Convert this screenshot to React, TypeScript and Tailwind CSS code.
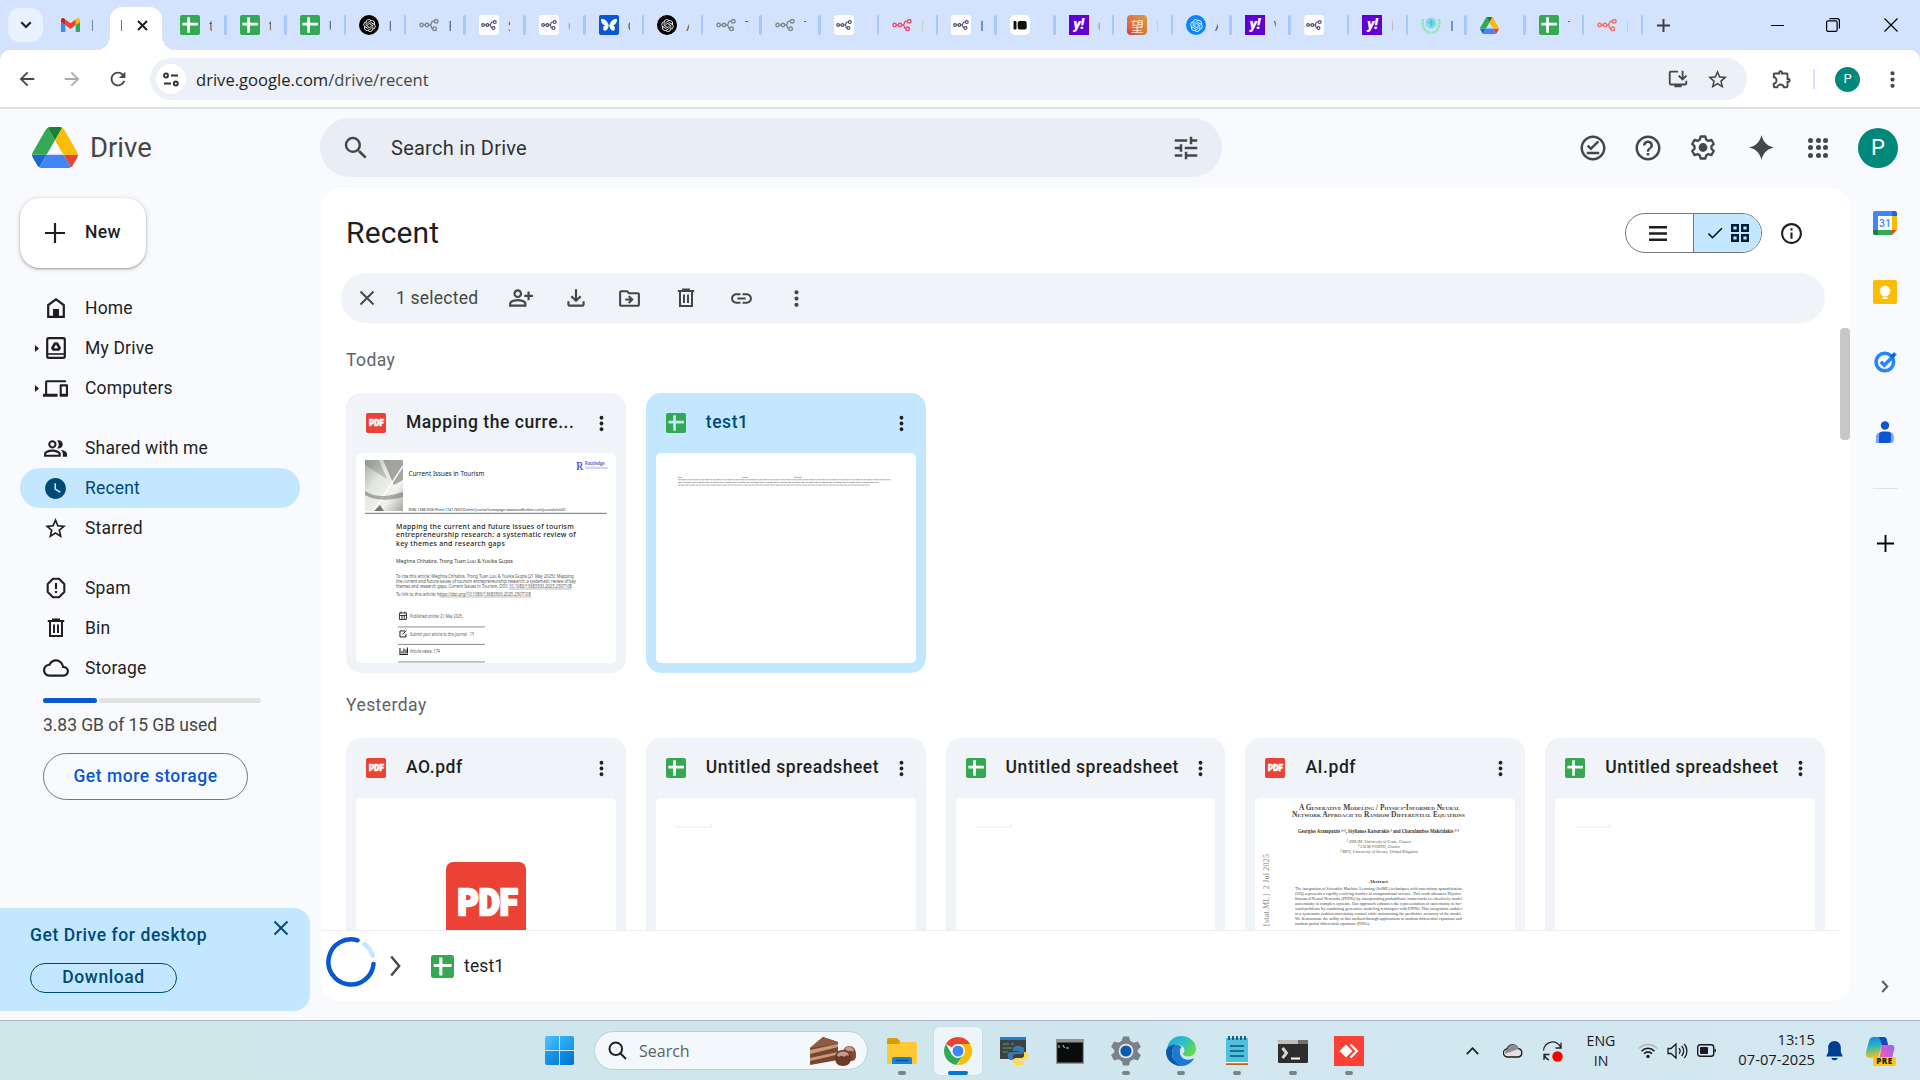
import type { ReactNode } from 'react';
import {
  MdArrowBack, MdArrowForward, MdCheck, MdCloudQueue, MdLink, MdMoreVert, MdOutlineDevices,
  MdOutlineDriveFileMove, MdOutlineExtension, MdOutlineFileDownload, MdOutlineInfo, MdOutlineInstallDesktop,
  MdOutlineOfflinePin, MdOutlinePeopleAlt, MdOutlinePersonAddAlt, MdRefresh, MdSearch, MdStarBorder,
  MdHelpOutline, MdTune, MdWatchLater,
} from 'react-icons/md';
import { RiOpenaiFill } from 'react-icons/ri';

/* ---------- shared icons ---------- */

function SheetsIcon({ size, cut = '#ffffff' }: { size: number; cut?: string }) {
  return (
    <svg width={size} height={size} viewBox="0 0 20 20" className="shrink-0">
      <rect width="20" height="20" rx="2" fill="#34a853" />
      <path d="M7.2 2.2h2.7v5.6h8v2.6h-8v7.4H7.2v-7.4H2.4V7.8h4.8z" fill={cut} />
    </svg>
  );
}

function PdfIcon({ size }: { size: number }) {
  return (
    <svg width={size} height={size} viewBox="0 0 80 80" className="shrink-0">
      <rect width="80" height="80" rx="7" fill="#ea4335" />
      <text x="11.5" y="52.5" fontFamily="Roboto" fontWeight="900" fontSize="36" textLength="60" lengthAdjust="spacingAndGlyphs" fill="#fff" stroke="#fff" strokeWidth="2.4">
        PDF
      </text>
    </svg>
  );
}

function DriveLogo({ w, h }: { w: number; h: number }) {
  return (
    <svg width={w} height={h} viewBox="0 0 87.3 78" preserveAspectRatio="none" className="shrink-0">
      <path fill="#1967d2" d="m6.6 66.85 3.85 6.65c.8 1.4 1.95 2.5 3.3 3.3l13.75-23.8H0c0 1.55.4 3.1 1.2 4.5z" />
      <path fill="#34a853" d="M43.65 25 29.9 1.2c-1.35.8-2.5 1.9-3.3 3.3l-25.4 44A9.06 9.06 0 0 0 0 53h27.5z" />
      <path fill="#ea4335" d="M73.55 76.8c1.35-.8 2.5-1.9 3.3-3.3l9.25-16c.8-1.4 1.2-2.95 1.2-4.5H59.8z" />
      <path fill="#188038" d="M43.65 25 57.4 1.2C56.05.4 54.5 0 52.9 0H34.4c-1.6 0-3.15.45-4.5 1.2z" />
      <path fill="#4285f4" d="M59.8 53H27.5L13.75 76.8c1.35.8 2.9 1.2 4.5 1.2h50.8c1.6 0 3.15-.45 4.5-1.2z" />
      <path fill="#fbbc04" d="m73.4 26.5-12.7-22c-.8-1.4-1.95-2.5-3.3-3.3L43.65 25 59.8 53h27.45c0-1.55-.4-3.1-1.2-4.5z" />
    </svg>
  );
}

function TrashIcon({ size }: { size: number }) {
  return (
    <svg width={size} height={size} viewBox="0 0 24 24" fill="none" stroke="currentColor" strokeWidth="2" className="shrink-0">
      <path d="M6 5.5v14.5h12V5.5M3.8 5h16.4M9 4.2V3.6h6v.6M10 8.5V17M14 8.5V17" />
    </svg>
  );
}

function CloseIcon({ size }: { size: number }) {
  return (
    <svg width={size} height={size} viewBox="0 0 16 16" fill="none" stroke="currentColor" strokeWidth="1.9" className="shrink-0">
      <path d="M1.5 1.5l13 13M14.5 1.5l-13 13" />
    </svg>
  );
}

function PlusIcon({ size, stroke = 2 }: { size: number; stroke?: number }) {
  return (
    <svg width={size} height={size} viewBox="0 0 20 20" fill="none" stroke="currentColor" strokeWidth={stroke} className="shrink-0">
      <path d="M10 0v20M0 10h20" />
    </svg>
  );
}

/* ---------- browser tab strip ---------- */

function NodesGlyph({ color, w = 20 }: { color: string; w?: number }) {
  return (
    <svg width={w} height={w} viewBox="0 0 20 20" fill="none" stroke={color} strokeWidth="1.4">
      <circle cx="2.6" cy="10" r="1.7" />
      <circle cx="8" cy="10" r="1.7" />
      <circle cx="17.2" cy="6.3" r="1.8" />
      <circle cx="15.6" cy="13.8" r="1.8" />
      <path d="M4.3 10h2M9.7 10h1.2c1.2 0 1.2-.8 1.4-1.8s.7-1.9 1.9-1.9h1.2M10.6 10c1.6 0 1.6 1 1.8 2s.6 1.8 1.6 1.8" />
    </svg>
  );
}

function WhiteNodes() {
  return (
    <div className="flex h-5 w-5 items-center justify-center rounded-[3px] bg-[#fdfdfd]">
      <NodesGlyph color="#4b4a6d" w={16} />
    </div>
  );
}

function GptIcon({ blue = false }: { blue?: boolean }) {
  return (
    <div className={blue ? 'flex h-5 w-5 items-center justify-center rounded-full bg-[#0a84ff] text-white' : 'flex h-5 w-5 items-center justify-center rounded-full bg-black text-white'}>
      <RiOpenaiFill size={15} />
    </div>
  );
}

function YahooIcon() {
  return (
    <div className="flex h-5 w-5 items-center justify-center bg-[#6001d2] font-['Roboto',sans-serif] text-[15px] leading-none font-black text-white">
      <span className="-mt-0.5 tracking-[-0.5px] italic">y!</span>
    </div>
  );
}

function ButterflyIcon() {
  return (
    <svg width="20" height="20" viewBox="0 0 20 20">
      <rect width="20" height="20" rx="2" fill="#0b57d6" />
      <path d="M9.7 10.5C9 7 5.5 3 2 4.2c0 3.3 1.5 5.8 4.4 6.1-2.5.8-3 3.2-1.4 5.5 2.7.2 4.3-2 4.7-5.3zM10.3 10.5c.7-3.5 4.2-7.5 7.7-6.3 0 3.3-1.5 5.8-4.4 6.1 2.5.8 3 3.2 1.4 5.5-2.7.2-4.3-2-4.7-5.3z" fill="#fff" />
    </svg>
  );
}

function TabbedIcon() {
  return (
    <svg width="20" height="20" viewBox="0 0 20 20">
      <rect width="20" height="20" rx="5" fill="#fff" />
      <rect x="3.5" y="6" width="3" height="8.5" rx="1" fill="#111" />
      <rect x="7.7" y="6" width="9" height="8.5" rx="2" fill="#111" />
    </svg>
  );
}

function WangIcon() {
  return (
    <div className="flex h-5 w-5 items-center justify-center rounded-[4px] bg-linear-to-tr from-[#e6123d] via-[#dd6a3f] via-30% to-[#dc9a43] font-['Noto_Sans_CJK_SC',sans-serif] text-[13px] leading-none text-[#fbeede]">
      望
    </div>
  );
}

function LaurelIcon() {
  return (
    <svg width="20" height="20" viewBox="0 0 20 20">
      <circle cx="10" cy="8" r="5.6" fill="#86dced" />
      <path d="M7.5 8.500c0-3 5-3 5-.5s-3.500 2-3.500.5 2-1.200 2-.5M10 4v8" stroke="#3fb6dd" fill="none" strokeWidth=".9" />
      <path d="M2 4c-1.500 7 1.500 13 7.500 14M18 4c1.500 7-1.500 13-7.500 14" stroke="#8fe3ae" strokeWidth="2.6" strokeDasharray="2.5 .7" fill="none" />
    </svg>
  );
}

function GmailIcon() {
  return (
    <svg width="19" height="14.5" viewBox="52 42 88 66">
      <path fill="#4285f4" d="M58 108h14V74L52 59v43c0 3.320 2.690 6 6 6" />
      <path fill="#34a853" d="M120 108h14c3.320 0 6-2.690 6-6V59l-20 15" />
      <path fill="#fbbc04" d="M120 48v26l20-15v-8c0-7.420-8.470-11.650-14.400-7.200" />
      <path fill="#ea4335" d="M72 74V48l24 18 24-18v26L96 92" />
      <path fill="#c5221f" d="M52 51v8l20 15V48l-5.600-4.200c-5.940-4.450-14.400-.22-14.400 7.200" />
    </svg>
  );
}

const tabs: { icon: ReactNode; label: string; faint?: boolean; wide?: boolean }[] = [
  { icon: <SheetsIcon size={20} />, label: 't', wide: true },
  { icon: <SheetsIcon size={20} />, label: 't', wide: true },
  { icon: <SheetsIcon size={20} />, label: 'U', wide: true },
  { icon: <GptIcon />, label: 'F', wide: true },
  { icon: <NodesGlyph color="#85888c" />, label: 'F', wide: true },
  { icon: <WhiteNodes />, label: 'S', wide: true },
  { icon: <WhiteNodes />, label: 'C', faint: true, wide: true },
  { icon: <ButterflyIcon />, label: 'C' },
  { icon: <GptIcon />, label: 'A' },
  { icon: <NodesGlyph color="#85888c" />, label: 'T' },
  { icon: <NodesGlyph color="#85888c" />, label: 'T' },
  { icon: <WhiteNodes />, label: '' },
  { icon: <NodesGlyph color="#ea4b71" />, label: 'I', faint: true },
  { icon: <WhiteNodes />, label: 'I' },
  { icon: <TabbedIcon />, label: '' },
  { icon: <YahooIcon />, label: 'C', faint: true },
  { icon: <WangIcon />, label: 'I', faint: true },
  { icon: <GptIcon blue />, label: 'A' },
  { icon: <YahooIcon />, label: 'V' },
  { icon: <WhiteNodes />, label: '' },
  { icon: <YahooIcon />, label: 'i', faint: true },
  { icon: <LaurelIcon />, label: 'I' },
  { icon: <DriveLogo w={19} h={17} />, label: '' },
  { icon: <SheetsIcon size={20} />, label: 'T' },
  { icon: <NodesGlyph color="#ff6d5a" />, label: 'I', faint: true },
];

function TabStrip() {
  return (
    <div className="flex h-[50px] items-center bg-[#d3e3fd] pl-2 font-['Open_Sans',sans-serif] text-[14px] text-[#474747]">
      <div className="flex h-[34px] w-[35px] items-center justify-center rounded-[12px] bg-[#e9f1fe] text-[#1f1f1f]">
        <svg width="12" height="8" viewBox="0 0 12 8" fill="none" stroke="currentColor" strokeWidth="2.2"><path d="M1.3 1.3L6 6l4.700-4.700" /></svg>
      </div>
      <div className="flex w-[67px] items-center gap-3 pl-[18px]">
        <GmailIcon />
        <span className="h-[11px] w-px bg-[#7d8794]" />
      </div>
      <div className="relative flex h-[43px] w-[52px] items-center self-end rounded-t-[12px] bg-white pb-[7px] pl-[11px]">
        <span className="h-[11px] w-px bg-[#777]" />
        <span className="ml-[15px] text-[#1f1f1f]">
          <svg width="11" height="11" viewBox="0 0 11 11" stroke="currentColor" strokeWidth="2"><path d="M1 1l9 9M10 1l-9 9" /></svg>
        </span>
        <svg className="absolute bottom-0 -left-3.5" width="14" height="14" viewBox="0 0 14 14"><path d="M14 0v14H0C8 14 14 8 14 0z" fill="#fff" /></svg>
        <svg className="absolute -right-3.5 bottom-0" width="14" height="14" viewBox="0 0 14 14"><path d="M0 0v14h14C6 14 0 8 0 0z" fill="#fff" /></svg>
      </div>
      <div className="ml-[5px] flex items-center">
        {tabs.map((t, i) => (
          <div key={i} className={t.wide ? 'flex h-5 w-[59.8px] items-center pl-[13px]' : 'flex h-5 w-[58.76px] items-center pl-[13px]'}>
            <div className="flex w-5 shrink-0 justify-center">{t.icon}</div>
            <span className={t.faint ? 'ml-[9px] w-[2px] overflow-hidden opacity-40' : 'ml-[9px] w-[2.5px] overflow-hidden opacity-85'}>{t.label}</span>
            <span className="ml-auto h-5 w-[2.5px] rounded-full bg-[#a8c7fa]" />
          </div>
        ))}
      </div>
      <div className="ml-3.5 text-[#3c3c3c]"><PlusIcon size={13} stroke={3} /></div>
      <div className="ml-auto flex items-center pr-[22px] text-black">
        <span className="h-px w-[13px] bg-black" />
        <svg width="14" height="14" viewBox="0 0 14 14" fill="none" stroke="currentColor" strokeWidth="1.2" className="ml-[42px]"><rect x=".6" y="2.9" width="10.5" height="10.5" rx="1.5" /><path d="M3.4.6h7.800a2.200 2.200 0 0 1 2.200 2.200v7.800" /></svg>
        <svg width="14" height="14" viewBox="0 0 14 14" stroke="currentColor" strokeWidth="1.2" className="ml-[44px]"><path d="M.5.5l13 13M13.5.5l-13 13" /></svg>
      </div>
    </div>
  );
}

function Toolbar() {
  return (
    <div className="bg-[#d3e3fd]">
      <div className="flex h-[59px] items-center rounded-t-[10px] border-b-2 border-[#dfe1e5] bg-white pt-px text-[#474747]">
        <div className="flex items-center pl-4"><MdArrowBack size={22} /></div>
        <div className="ml-[23px] text-[#ababab]"><MdArrowForward size={22} /></div>
        <div className="ml-[24px]"><MdRefresh size={22} /></div>
        <div className="ml-[21px] flex h-[42px] w-[1597px] items-center rounded-full bg-[#ebf0f9] pl-1.5">
          <div className="flex h-[30px] w-[30px] items-center justify-center rounded-full bg-white">
            <svg width="16" height="15" viewBox="0 0 16 15" fill="none" stroke="#333" strokeWidth="1.9"><circle cx="3" cy="3.5" r="2" /><path d="M8 3.5h7M1 11.5h7" /><circle cx="12.8" cy="11.5" r="2" /></svg>
          </div>
          <span className="ml-[10px] pt-0.5 font-['Open_Sans',sans-serif] text-[16.6px] text-[#1f1f1f]">drive.google.com<span className="text-[#474747]">/drive/recent</span></span>
          <div className="ml-auto flex items-center gap-[17px] pr-[18px]">
            <MdOutlineInstallDesktop size={22} />
            <MdStarBorder size={23} />
          </div>
        </div>
        <div className="ml-[24px]"><MdOutlineExtension size={22} /></div>
        <span className="ml-5 h-5 w-0.5 bg-[#d3e3fd]" />
        <div className="ml-5 flex h-[25px] w-[25px] items-center justify-center rounded-full bg-[#00897b] font-['Roboto',sans-serif] text-[13px] text-white">P</div>
        <div className="ml-[20px]"><MdMoreVert size={25} /></div>
      </div>
    </div>
  );
}

/* ---------- Drive header ---------- */

function GearIcon() {
  return (
    <svg width="26" height="26" viewBox="0 0 26 26" fill="none" stroke="currentColor" strokeWidth="2.3" strokeLinejoin="round">
      <path d="M10.600 1.500h4.800l.7 3.100 2.300 1.300 3-1 2.400 4.100-2.300 2.200v2.600l2.300 2.200-2.400 4.100-3-1-2.300 1.300-.7 3.100h-4.800l-.7-3.100-2.300-1.300-3 1L2.200 16l2.300-2.200v-2.600L2.200 9l2.400-4.100 3 1 2.300-1.300z" />
      <circle cx="13" cy="12.500" r="4.400" fill="currentColor" stroke="none" />
    </svg>
  );
}

function Header() {
  return (
    <header className="flex h-[79px] items-center pb-0.5 text-[#444746]">
      <div className="flex w-80 items-center pl-8">
        <DriveLogo w={46} h={41} />
        <span className="ml-3 text-[27.5px] leading-none">Drive</span>
      </div>
      <div className="flex h-[59px] w-[902px] items-center rounded-full bg-[#e9eef6] pr-[21px] pl-[21px]">
        <MdSearch size={30} />
        <span className="ml-[20px] text-[20px] tracking-[0.25px] text-[#303232]">Search in Drive</span>
        <div className="ml-auto"><MdTune size={30} /></div>
      </div>
      <div className="ml-auto flex items-center pr-[22px]">
        <MdOutlineOfflinePin size={30} />
        <MdHelpOutline size={30} className="ml-[25px]" />
        <div className="ml-[27px]"><GearIcon /></div>
        <svg width="25" height="25" viewBox="0 0 24 24" className="ml-[33px]" fill="currentColor"><path d="M12 0c1.300 6.300 5.500 10.700 12 12-6.500 1.300-10.700 5.700-12 12C10.700 17.700 6.500 13.300 0 12 6.500 10.700 10.700 6.300 12 0z" /></svg>
        <div className="ml-[34px] grid grid-cols-3 gap-[2.5px]">
          {Array.from({ length: 9 }, (_, i) => <span key={i} className="h-[5px] w-[5px] rounded-full bg-[#444746]" />)}
        </div>
        <div className="ml-[30px] flex h-10 w-10 items-center justify-center rounded-full bg-[#00897b] text-[22px] text-white">P</div>
      </div>
    </header>
  );
}

/* ---------- left navigation ---------- */

function HomeIcon() {
  return (
    <svg width="18" height="20" viewBox="0 0 18 20"><path d="M1.2 18.8V7L9 1.300 16.800 7v11.800z" fill="none" stroke="currentColor" strokeWidth="2.2" /><path d="M6 11h6v8H6z" fill="currentColor" /></svg>
  );
}

function MyDriveIcon() {
  return (
    <svg width="20" height="22" viewBox="0 0 20 22" fill="none" stroke="currentColor">
      <rect x="1.2" y="1.2" width="17.6" height="19.6" rx="1.5" strokeWidth="2.2" />
      <path d="M1.5 17h17" strokeWidth="1.6" />
      <path d="M9 6.500h2l2.600 4.500-.8 1.500H7.200L6.400 11z" strokeWidth="2.6" strokeLinejoin="round" />
    </svg>
  );
}

function SpamIcon() {
  return (
    <svg width="20" height="22" viewBox="0 0 20 22" fill="none" stroke="currentColor" strokeWidth="2.1"><path d="M7 1.700h6l5.300 5.300v8L13 20.300H7L1.700 15V7z" strokeLinejoin="round" /><path d="M10 6v6M10 14v2" /></svg>
  );
}

function NavItem({ icon, label, active, arrow }: { icon: ReactNode; label: string; active?: boolean; arrow?: boolean }) {
  return (
    <div className={active ? 'flex h-10 w-[280px] items-center rounded-full bg-[#c2e7ff] text-[#004a77]' : 'flex h-10 w-[280px] items-center text-[#1f1f1f]'}>
      <span className="flex w-[21.5px] justify-end pr-[3px]">
        {arrow && <svg width="4" height="7" viewBox="0 0 4 7"><path d="M0 0l4 3.500L0 7z" fill="currentColor" /></svg>}
      </span>
      <span className="flex w-7 justify-center">{icon}</span>
      <span className="ml-[15.5px] text-[17.5px] tracking-[0.18px]">{label}</span>
    </div>
  );
}

function Sidebar() {
  return (
    <nav className="flex w-[321px] flex-col">
      <div className="flex flex-col pl-5">
        <div className="mt-2.5 flex h-[70px] w-[126px] items-center rounded-[20px] bg-white pl-[25px] shadow-[0_1px_2px_rgba(60,64,67,0.4),0_1px_4px_1px_rgba(60,64,67,0.15)]">
          <PlusIcon size={20} stroke={2.2} />
          <span className="ml-5 pb-0.5 text-[17.5px] font-medium tracking-[0.3px]">New</span>
        </div>
        <div className="mt-5 flex flex-col">
          <NavItem icon={<HomeIcon />} label="Home" />
          <NavItem icon={<MyDriveIcon />} label="My Drive" arrow />
          <NavItem icon={<MdOutlineDevices size={25} />} label="Computers" arrow />
        </div>
        <div className="mt-5 flex flex-col">
          <NavItem icon={<MdOutlinePeopleAlt size={25} />} label="Shared with me" />
          <NavItem icon={<MdWatchLater size={25} />} label="Recent" active />
          <NavItem icon={<MdStarBorder size={25} />} label="Starred" />
        </div>
        <div className="mt-5 flex flex-col">
          <NavItem icon={<SpamIcon />} label="Spam" />
          <NavItem icon={<TrashIcon size={24} />} label="Bin" />
          <NavItem icon={<MdCloudQueue size={26} />} label="Storage" />
        </div>
      </div>
      <div className="mt-2.5 flex flex-col pl-[43px]">
        <div className="flex h-[5px] w-[218px] gap-[2px]">
          <span className="w-[54px] rounded-full bg-[#0b57d0]" />
          <span className="flex-1 rounded-full bg-[#e1e3e1]" />
        </div>
        <span className="mt-[9px] text-[17.5px] leading-[26px] tracking-[-0.05px] text-[#444746]">3.83 GB of 15 GB used</span>
        <div className="mt-[15px] flex h-[47px] w-[205px] items-center justify-center rounded-full border border-[#747775] text-[17.5px] font-[480] tracking-[0.54px] text-[#0b57d0]">Get more storage</div>
      </div>
      <div className="mt-auto mb-[9px] flex h-[103px] w-[310px] justify-between rounded-r-[16px] bg-[#c2e7ff] pr-[21px] pl-[30px] text-[17.5px] font-[470] tracking-[0.57px] text-[#004a77]">
        <div className="flex flex-col pt-[14px]">
          <span className="leading-[26px]">Get Drive for desktop</span>
          <div className="mt-[15px] flex h-[30px] w-[147px] items-center justify-center rounded-full border border-[#004a77] pb-0.5">Download</div>
        </div>
        <div className="pt-[12px]"><CloseIcon size={16} /></div>
      </div>
    </nav>
  );
}

/* ---------- document previews ---------- */

type Line = [text: string, x: number, y: number, w: number];

function ArticlePreview() {
  const cite: Line[] = [
    ['To cite this article: Meghna Chhabra, Trong Tuan Luu & Yuvika Gupta (21 May 2025): Mapping', 40, 125, 178],
    ['the current and future issues of tourism entrepreneurship research: a systematic review of key', 40, 130, 180],
    ['themes and research gaps, Current Issues in Tourism, DOI: 10.1080/13683500.2025.2507108', 40, 135, 176],
    ['To link to this article: https://doi.org/10.1080/13683500.2025.2507108', 40, 143, 135],
  ];
  return (
    <svg width="260" height="210" viewBox="0 0 260 210" fontFamily="Noto Sans" fill="#333">
      <defs>
        <linearGradient id="cover" x1="0" y1="0" x2="1" y2="1">
          <stop offset="0" stopColor="#a5a8a2" /><stop offset=".35" stopColor="#e4e6e0" /><stop offset=".7" stopColor="#f2f3ee" /><stop offset="1" stopColor="#a2a59f" />
        </linearGradient>
      </defs>
      <rect x="9" y="7" width="38" height="51" fill="url(#cover)" />
      <path d="M27 7h20v20l-9 5z" fill="#5b5e5a" opacity=".5" />
      <path d="M9 7h14l8 19L9 12z" fill="#6c6f6a" opacity=".35" />
      <path d="M47 13L18 57" stroke="#fff" strokeWidth="1.5" />
      <path d="M9 38c12 8 25 5 38 1v5C34 48 20 48 9 42z" fill="#3d403c" opacity=".4" />
      <path d="M24 52l-6 6h10z" fill="#444" opacity=".7" />
      <text x="52.5" y="23.3" fontSize="6.3" textLength="76" fill="#222">Current Issues in Tourism</text>
      <text x="220.5" y="16.5" fontSize="12" fontWeight="700" fontFamily="Liberation Serif" textLength="7" lengthAdjust="spacingAndGlyphs" fill="#5a54d8">R</text>
      <text x="229" y="12" fontSize="4.5" fontWeight="700" textLength="20" fill="#7a75e0">Routledge</text>
      <text x="229" y="16" fontSize="3" textLength="23" fill="#9c98e8">Taylor &amp; Francis Group</text>
      <text x="52.5" y="58" fontSize="3.6" textLength="157">ISSN: 1368-3500 (Print) 1747-7603 (Online) Journal homepage: www.tandfonline.com/journals/rcit20</text>
      <path d="M9 60.3h242" stroke="#6f7274" strokeWidth="1" />
      <g fontSize="7" fontWeight="500" fill="#222">
        <text x="40" y="75.7" textLength="178">Mapping the current and future issues of tourism</text>
        <text x="40" y="84.3" textLength="180">entrepreneurship research: a systematic review of</text>
        <text x="40" y="93" textLength="109">key themes and research gaps</text>
      </g>
      <text x="40" y="110.3" fontSize="5" textLength="117" fill="#333">Meghna Chhabra, Trong Tuan Luu &amp; Yuvika Gupta</text>
      {cite.map(([t, x, y, w]) => <text key={y} x={x} y={y} fontSize="4.4" textLength={w} lengthAdjust="spacingAndGlyphs" fill="#555">{t}</text>)}
      <path d="M152.5 136h63M83.5 144h92" stroke="#777" strokeWidth=".5" />
      <path d="M43.5 160h7v6.500h-7zM45 158.500v2M49 158.500v2M43.500 162.500h7M46 162v4M48.300 162v4" fill="none" stroke="#222" strokeWidth=".9" />
      <path d="M49 178h-5v6h6v-3M46.500 181.500l4-4" fill="none" stroke="#222" strokeWidth="1" />
      <path d="M44 195v6.500h8M46 200.500v-2.500M48 200.500v-5M50 200.500v-4M51.500 200.500v-6" fill="none" stroke="#222" strokeWidth="1.1" />
      <g fontSize="4.4" fill="#555">
        <text x="54" y="165" textLength="53" lengthAdjust="spacingAndGlyphs">Published online: 21 May 2025.</text>
        <text x="54" y="183.5" textLength="57" lengthAdjust="spacingAndGlyphs">Submit your article to this journal</text>
        <text x="54" y="200.3" textLength="30" lengthAdjust="spacingAndGlyphs">Article views: 174</text>
      </g>
      <path d="M114 179.500h3.500v3.500M114 183l3-3" fill="none" stroke="#777" strokeWidth=".5" />
      <path d="M42 174h87M42 191.500h87M42 209h87" stroke="#8b8d8f" strokeWidth="1" />
    </svg>
  );
}

function DenseSheetPreview() {
  return (
    <svg width="260" height="210" viewBox="0 0 260 210" fill="none" stroke="#aaa">
      <path d="M22 24.300h4M86 24.300h6M138 24.300h8" stroke="#999" strokeWidth=".8" />
      <path d="M22 26.700h213" strokeWidth="1" strokeDasharray="3 .5 5 .6 2 .5" />
      <path d="M22 29.400h201" strokeWidth="1" strokeDasharray="4 .6 2 .5 6 .6" />
      <path d="M22 32h192" strokeWidth="1" strokeDasharray="2 .5 4 .6 3 .5" />
    </svg>
  );
}

function EmptySheetPreview() {
  return (
    <svg width="260" height="210" viewBox="0 0 260 210" fill="none">
      <path d="M21 29h34v-4" stroke="#f0f0f0" strokeWidth="1.3" />
      <path d="M20.500 22v7" stroke="#f9f9f9" />
    </svg>
  );
}

function PaperPreview() {
  const body = [
    'The integration of Scientific Machine Learning (SciML) techniques with uncertainty quantification',
    '(UQ) represents a rapidly evolving frontier in computational science. This work advances Physics-',
    'Informed Neural Networks (PINNs) by incorporating probabilistic frameworks to effectively model',
    'uncertainty in complex systems. Our approach enhances the representation of uncertainty in for-',
    'ward problems by combining generative modeling techniques with PINNs. This integration enables',
    'in a systematic fashion uncertainty control while maintaining the predictive accuracy of the model.',
    'We demonstrate the utility of this method through applications to random differential equations and',
  ];
  return (
    <svg width="260" height="210" viewBox="0 0 260 210" fontFamily="Liberation Serif" fill="#333">
      <g fontWeight="700" fill="#444" className="[font-variant-caps:small-caps]">
        <text x="44" y="12" fontSize="7.4" textLength="161" lengthAdjust="spacingAndGlyphs">A Generative Modeling / Physics-Informed Neural</text>
        <text x="37" y="19" fontSize="7.4" textLength="173" lengthAdjust="spacingAndGlyphs">Network Approach to Random Differential Equations</text>
      </g>
      <text x="43" y="34.7" fontSize="5.2" fontWeight="700" textLength="161" lengthAdjust="spacingAndGlyphs">Georgios Arampatzis ¹·², Stylianos Katsarakis ² and Charalambos Makridakis ²·³</text>
      <g fontSize="5" fontStyle="italic" fill="#555">
        <text x="92" y="44.7" textLength="64" lengthAdjust="spacingAndGlyphs">¹ DMAM, University of Crete, Greece</text>
        <text x="103" y="49.9" textLength="42" lengthAdjust="spacingAndGlyphs">² IACM-FORTH, Greece</text>
        <text x="85" y="55.1" textLength="78" lengthAdjust="spacingAndGlyphs">³ MPS, University of Sussex, United Kingdom</text>
      </g>
      <text x="114" y="84.8" fontSize="5" fontWeight="700" textLength="19">Abstract</text>
      <g fontSize="5" fill="#444">
        {body.map((t, i) => <text key={t} x="40" y={91.7 + i * 5.1} textLength="167" lengthAdjust="spacingAndGlyphs">{t}</text>)}
        <text x="40" y="127.4" textLength="75" lengthAdjust="spacingAndGlyphs">random partial differential equations (PDEs).</text>
      </g>
      <text transform="translate(14 128) rotate(-90)" fontSize="8" textLength="72" fill="#8a8a8a" xmlSpace="preserve">[stat.ML]  2 Jul 2025</text>
    </svg>
  );
}

/* ---------- file cards ---------- */

function FileCard({ kind, name, selected, children }: { kind: 'pdf' | 'sheet'; name: string; selected?: boolean; children: ReactNode }) {
  return (
    <div className={selected ? 'flex h-[280px] flex-col rounded-[15px] bg-[#c2e7ff] px-2.5 pb-2.5 text-[#004a77]' : 'flex h-[280px] flex-col rounded-[15px] bg-[#f0f4f9] px-2.5 pb-2.5 text-[#1f1f1f]'}>
      <div className="flex h-[60px] shrink-0 items-center pl-2.5">
        {kind === 'pdf' ? <PdfIcon size={20} /> : <SheetsIcon size={20} cut={selected ? '#c2e7ff' : '#ffffff'} />}
        <span className="ml-5 pb-0.5 text-[17.5px] font-[470] tracking-[0.56px] whitespace-nowrap">{name}</span>
        <span className="mr-[3px] ml-auto text-[#1f1f1f]"><MdMoreVert size={23} /></span>
      </div>
      <div className="flex h-[210px] justify-center overflow-hidden rounded-[5px] bg-white">{children}</div>
    </div>
  );
}

function MainPanel() {
  return (
    <main className="relative flex h-[813px] w-[1529px] flex-col overflow-hidden rounded-[20px] bg-white">
      <div className="flex h-[90px] items-center pr-[46px] pl-[25px]">
        <h1 className="pb-0.5 text-[30px] tracking-[0.15px] text-[#1f1f1f]">Recent</h1>
        <div className="ml-auto flex h-10 w-[137px] overflow-hidden rounded-full border border-[#747775]">
          <div className="flex w-[67px] items-center justify-center pr-0.5 text-[#1f1f1f]">
            <svg width="18" height="15" viewBox="0 0 18 15" stroke="currentColor" strokeWidth="2.4"><path d="M0 1.300h18M0 7.500h18M0 13.700h18" /></svg>
          </div>
          <div className="flex flex-1 items-center justify-center gap-[6px] border-l border-[#747775] bg-[#c2e7ff] text-[#001d35]">
            <MdCheck size={20} />
            <svg width="18" height="18" viewBox="0 0 18 18" fill="none" stroke="currentColor" strokeWidth="2.4">
              <path d="M1.200 1.200h5.600v5.600H1.200zM11.200 1.200h5.600v5.600h-5.600zM1.200 11.200h5.600v5.600H1.200zM11.200 11.200h5.600v5.600h-5.600z" />
            </svg>
          </div>
        </div>
        <div className="ml-[17.5px] text-[#1f1f1f]"><MdOutlineInfo size={25} /></div>
      </div>

      <div className="mt-[-5px] ml-5 flex h-[50px] w-[1484px] shrink-0 items-center rounded-full bg-[#f0f4f9] pl-[17.5px] text-[#444746]">
        <CloseIcon size={16} />
        <span className="ml-[21.5px] w-[112px] text-[17.5px] font-[450] tracking-[0.22px]">1 selected</span>
        <span><MdOutlinePersonAddAlt size={26} /></span>
        <span className="ml-[29px]"><MdOutlineFileDownload size={26} /></span>
        <span className="ml-[28px]"><MdOutlineDriveFileMove size={25} /></span>
        <span className="ml-[32px]"><TrashIcon size={24} /></span>
        <span className="ml-[30.5px]"><MdLink size={25} /></span>
        <span className="ml-[30px]"><MdMoreVert size={25} /></span>
      </div>

      <div className="h-[607px] shrink-0 overflow-hidden px-[25px]">
        <div className="flex h-[70px] items-center pt-[5px] text-[17.5px] font-[450] tracking-[0.4px] text-[#5f6368]">Today</div>
        <div className="grid grid-cols-5 gap-5">
          <FileCard kind="pdf" name="Mapping the curre..."><ArticlePreview /></FileCard>
          <FileCard kind="sheet" name="test1" selected><DenseSheetPreview /></FileCard>
        </div>
        <div className="flex h-[65px] items-center text-[17.5px] font-[450] tracking-[0.45px] text-[#5f6368]">Yesterday</div>
        <div className="grid grid-cols-5 gap-5">
          <FileCard kind="pdf" name="AO.pdf"><div className="pt-16"><PdfIcon size={80} /></div></FileCard>
          <FileCard kind="sheet" name="Untitled spreadsheet"><EmptySheetPreview /></FileCard>
          <FileCard kind="sheet" name="Untitled spreadsheet"><EmptySheetPreview /></FileCard>
          <FileCard kind="pdf" name="AI.pdf"><PaperPreview /></FileCard>
          <FileCard kind="sheet" name="Untitled spreadsheet"><EmptySheetPreview /></FileCard>
        </div>
      </div>

      <div className="absolute top-[140px] right-0 h-[112px] w-2.5 rounded-[4px] bg-[#c7c7c7]" />

      <div className="absolute bottom-0 left-0 flex h-[71px] w-[1519px] items-center border-t border-[#edeeef] bg-white pl-[5px]">
        <svg width="50" height="50" viewBox="0 0 50 50" fill="none" strokeWidth="4.5" strokeLinecap="round" className="-mt-[8px]">
          <path d="M47.500 27A22.600 22.600 0 1 1 31.500 3.300" stroke="#0b57d0" />
          <path d="M38.500 7.400A22.600 22.600 0 0 1 46.700 18.500" stroke="#c2e7ff" />
        </svg>
        <svg width="11" height="22" viewBox="0 0 11 22" fill="none" stroke="#444746" strokeWidth="2.4" className="ml-[14px]"><path d="M1.200 1.500l8 9.500-8 9.500" /></svg>
        <div className="ml-[30px]"><SheetsIcon size={23} /></div>
        <span className="ml-2.5 text-[17.5px] font-[450] tracking-[0.15px] text-[#1f1f1f]">test1</span>
      </div>
    </main>
  );
}

/* ---------- right rail ---------- */

function SideRail() {
  return (
    <aside className="flex w-[70px] flex-col items-center pt-[23px] text-black">
      <svg width="24" height="24" viewBox="0 0 24 24">
        <path d="M2 0h17v5H5v14H0V2a2 2 0 0 1 2-2z" fill="#4285f4" />
        <path d="M19 0h3a2 2 0 0 1 2 2v3h-5z" fill="#1967d2" />
        <path d="M19 5h5v14h-5z" fill="#fbbc04" />
        <path d="M5 19h14v5H5z" fill="#34a853" />
        <path d="M0 19h5v5H2a2 2 0 0 1-2-2z" fill="#188038" />
        <path d="M19 19h5l-5 5z" fill="#ea4335" />
        <path d="M5 5h14v14H5z" fill="#fff" />
        <text x="12" y="16" textAnchor="middle" fontSize="10.5" fontWeight="500" fontFamily="Roboto" fill="#4285f4">31</text>
      </svg>
      <svg width="24" height="24" viewBox="0 0 24 24" className="mt-[45px]">
        <rect width="24" height="24" rx="2" fill="#fbbc04" />
        <circle cx="12" cy="11" r="5.3" fill="#fff" />
        <path d="M9.500 14h5v2.200h-5zM9.500 17.300h5v1.700h-5z" fill="#fff" />
      </svg>
      <svg width="24" height="24" viewBox="0 0 24 24" className="mt-[46px]">
        <circle cx="11.8" cy="12" r="8.8" fill="none" stroke="#2684fc" strokeWidth="3.5" />
        <path d="M7.800 11.800l3.500 3.500L20 6.500" fill="none" stroke="#2684fc" strokeWidth="3.6" />
        <path d="M17 6.200l2.600 2.600 3.700-3.700L20.700 2.500z" fill="#0d62d3" />
        <path d="M20.700 2.500l2.600 2.600.5-.5-2.600-2.600z" fill="#2684fc" />
      </svg>
      <svg width="20" height="22" viewBox="0 0 20 22" className="mt-[47px]">
        <circle cx="10" cy="4.5" r="4.2" fill="#0b57d0" />
        <path d="M5 11.500C2 11.500 1 14 1 16.500V22h8V11.500zM15 11.500c2.500 0 3.800 2 3.800 4.500v3a3 3 0 0 1-3 3H11V11.500z" fill="#7ba2f5" />
        <path d="M8 10.500h5a3 3 0 0 1 3 3V19a3 3 0 0 1-3 3H4v-7.500a4 4 0 0 1 4-4z" fill="#0b57d0" />
      </svg>
      <div className="mt-[45px] h-px w-[25px] bg-[#dfe2e6]" />
      <div className="mt-[46px]"><PlusIcon size={17} stroke={2.2} /></div>
      <svg width="8" height="13" viewBox="0 0 8 13" fill="none" stroke="#5f6368" strokeWidth="2.2" className="mt-auto mb-[27px]"><path d="M1.200 1l5 5.500-5 5.500" /></svg>
    </aside>
  );
}

/* ---------- Windows taskbar ---------- */

function AppSlot({ children, running, active }: { children: ReactNode; running?: boolean; active?: boolean }) {
  return (
    <div className={active ? 'flex h-12 w-12 flex-col items-center rounded-[5px] bg-[#edf5f8] pt-[9px] shadow-[0_0_1px_rgba(0,0,0,0.25)]' : 'flex h-12 w-12 flex-col items-center pt-[9px]'}>
      <div className="flex h-[30px] items-center">{children}</div>
      {active && <span className="mt-[5px] h-1 w-5 rounded-full bg-[#0078d4]" />}
      {running && <span className="mt-[5px] h-1 w-2 rounded-full bg-[#788488]" />}
    </div>
  );
}

function Taskbar() {
  return (
    <footer className="flex h-[60px] items-center border-t border-[#a9b4c0] bg-linear-to-r from-[#cfe6ea] via-[#d0e6ee] to-[#d3e8f0] font-['Open_Sans',sans-serif] text-[#1b1b1b]">
      <div className="ml-[544.5px] grid grid-cols-2 gap-px">
        <span className="h-[14px] w-[14px] rounded-tl-[2px] bg-linear-to-br from-[#4cc5fb] to-[#1f9ff0]" />
        <span className="h-[14px] w-[14px] rounded-tr-[2px] bg-linear-to-br from-[#33b2f5] to-[#1492e8]" />
        <span className="h-[14px] w-[14px] rounded-bl-[2px] bg-linear-to-br from-[#1f9ff0] to-[#0a80da]" />
        <span className="h-[14px] w-[14px] rounded-br-[2px] bg-linear-to-br from-[#1290e6] to-[#0572cc]" />
      </div>
      <div className="ml-[20.5px] flex h-[39px] w-[274px] items-center rounded-full border border-[#bccdd5] bg-[#f2f8fb] pl-[13px]">
        <svg width="19" height="19" viewBox="0 0 19 19" fill="none" stroke="#222" strokeWidth="2"><circle cx="7.800" cy="7.800" r="6.300" /><path d="M12.300 12.300l5.700 5.700" /></svg>
        <span className="ml-[12px] text-[16px] text-[#5c6062]">Search</span>
        <svg width="46" height="30" viewBox="0 0 46 30" className="mr-[11px] ml-auto">
          <path d="M0 12L13 1l15 5v18L0 29z" fill="#7a4630" />
          <path d="M0 12L13 1l15 5-1 2z" fill="#8f5a42" />
          <path d="M0 14l28-6v3L0 18zM0 22l28-6v2.500L0 25z" fill="#c99a7c" />
          <path d="M33 18c0-5 2-8 6-8 5 0 7 4 7 9s-2 6-6 6-7-2-7-7z" fill="#7c4a36" />
          <path d="M35 13c2-4 8-3 9 2-2 1-4-1-5 0s-3-1-4-2z" fill="#c79b86" />
          <path d="M25 22c0-5 3-8 8-8s8 3 8 8-3 8-8 8-8-3-8-8z" fill="#6a3a27" />
          <path d="M27 19c1-4 10-5 12 0-1 2-2-1-3.500 1s-3.500-1-5 0-2.500 1-3.500-1z" fill="#c79b86" />
        </svg>
      </div>
      <div className="ml-[10px] flex items-center gap-[7.9px] pt-px">
        <AppSlot running>
          <svg width="30" height="28" viewBox="0 0 30 28"><path d="M0 3a2 2 0 0 1 2-2h8l3 3v5H0z" fill="#d99b0b" /><path d="M0 7h12l2-2h14a2 2 0 0 1 2 2v18a2 2 0 0 1-2 2H2a2 2 0 0 1-2-2z" fill="#ffc933" /><path d="M5 27v-5a2 2 0 0 1 2-2h16a2 2 0 0 1 2 2v5z" fill="#1581d8" /><path d="M9 23.500h12" stroke="#0a4e92" strokeWidth="1.3" /></svg>
        </AppSlot>
        <AppSlot active>
          <svg width="30" height="30" viewBox="0 0 48 48">
            <path d="M24 24L4.600 12.800A22.400 22.400 0 0 1 43.400 12.800z" fill="#ea4335" /><path d="M4.600 12.800A22.400 22.400 0 0 0 21 46.200L33.700 29.600 24 24l-9.700 5.600z" fill="#34a853" />
            <path d="M43.400 12.800H24l9.700 16.800L22.500 46.400A22.400 22.400 0 0 0 43.400 12.800z" fill="#fbbc04" />
            <circle cx="24" cy="24" r="11.200" fill="#fff" /><circle cx="24" cy="24" r="8.800" fill="#4285f4" />
          </svg>
        </AppSlot>
        <AppSlot>
          <svg width="30" height="30" viewBox="0 0 30 30"><path d="M1 1h26v22H1z" fill="#3e4144" /><path d="M1 1h26v3H1z" fill="#1d7fd0" /><path d="M4 8h6M12 8h3M4 12h9M4 16h5" stroke="#4fa861" strokeWidth="1.2" /><path d="M19 10c-5 0-5 2-5 5h6v1h-8c-5 0-4 8 0 8h2v-3c0-3 2-3 4-3h4c3 0 3-2 3-4 0-3-2-4-6-4z" fill="#3a78b0" /><path d="M20 29.500c5 0 5-2 5-4.500h-6v-1h7c5 0 4-8 0-8h-1v3c0 3-2 3-4 3h-4c-2 0-3 2-3 4 0 2.500 2 3.500 6 3.500z" fill="#ffd94a" /></svg>
        </AppSlot>
        <AppSlot>
          <svg width="28" height="25" viewBox="0 0 28 25"><rect width="28" height="25" fill="#8f9496" /><rect x="1.2" y="3.5" width="25.6" height="20" fill="#0b0b0b" /><path d="M3 6v3M5 6.500h.1M5 8.500h.1M7 6l1.500 3M10 9h3" stroke="#ccc" strokeWidth="1" /></svg>
        </AppSlot>
        <AppSlot running>
          <svg width="30" height="30" viewBox="0 0 30 30"><path d="M12 .5h6l1.200 4.300 3.400 2 4.300-1.200 3 5.200-3.200 3.100v2.200l3.200 3.100-3 5.200-4.300-1.200-3.400 2L18 29.500h-6l-1.200-4.300-3.400-2-4.300 1.200-3-5.200 3.200-3.100v-2.200L.1 10.800l3-5.200 4.300 1.200 3.400-2z" fill="#7a8189" /><circle cx="15" cy="15" r="7.300" fill="#e6ecf2" /><circle cx="15" cy="15" r="5.600" fill="#0a5ba8" /></svg>
        </AppSlot>
        <AppSlot running>
          <svg width="30" height="30" viewBox="0 0 30 30">
            <defs><linearGradient id="edgeTop" x1="0" y1="0" x2="1" y2=".5"><stop offset="0" stopColor="#23a6e8" /><stop offset=".6" stopColor="#2fc0c0" /><stop offset="1" stopColor="#63d94e" /></linearGradient></defs>
            <path d="M1 13C2 5 8 0 15 0c9 0 15 6 15 13 0 5-4 7.500-8 7.500-3 0-5-1.200-5-2.500 0-1 1.500-1.500 1.500-4C18.500 11 15 8.500 11 8.500S3 10 1 13z" fill="url(#edgeTop)" />
            <path d="M0 16C0 11 5 8 11 8.500c-3 1.500-5 5-5 9 0 6 5 10 10 12.400C7 30.500 0 24 0 16z" fill="#0c59a4" />
            <path d="M11 8.500c-3 1.500-5 5-5 9 0 6 5 11.500 10 12.400 5-.2 9-3 11.500-6.500.4-.7-.2-1-.8-.7-8 3.500-14-2-12.700-9 .2-1 .8-2 1.500-2.700-1.500-1.700-3-2.300-4.500-2.500z" fill="#1b7ad2" />
          </svg>
        </AppSlot>
        <AppSlot running>
          <svg width="24" height="30" viewBox="0 0 24 30"><path d="M1 2h22v24H1z" fill="#4fc0de" /><path d="M1 26h22v3H1z" fill="#b5651d" /><path d="M1 26h22v1.200H1z" fill="#fff" /><path d="M4 0v4M8 0v4M12 0v4M16 0v4M20 0v4" stroke="#11506b" strokeWidth="1.8" /><path d="M5 10h14M5 15h14M5 20h14" stroke="#17708f" strokeWidth="2" /></svg>
        </AppSlot>
        <AppSlot running>
          <svg width="30" height="23" viewBox="0 0 30 23"><rect width="30" height="23" rx="1.5" fill="#2d2d2d" /><path d="M0 4V1.500A1.500 1.500 0 0 1 1.500 0H20v4z" fill="#bdbdbd" /><path d="M20 0h8.500A1.500 1.500 0 0 1 30 1.500V4H20z" fill="#6f6f6f" /><path d="M4.500 8l4 5-4 5" stroke="#d5d5d5" strokeWidth="3" fill="none" /><path d="M13 18.500h9" stroke="#fff" strokeWidth="2" /></svg>
        </AppSlot>
        <AppSlot running>
          <svg width="30" height="30" viewBox="0 0 30 30"><path d="M0 0h30v30H0z" fill="#fb4135" /><path d="M12 8.500l6.500 6.500-6.500 6.500L5.500 15z" fill="#fff" /><path d="M16.500 8.500L23 15l-6.500 6.500" stroke="#fff" strokeWidth="2.2" fill="none" /></svg>
        </AppSlot>
      </div>
      <div className="ml-auto flex items-center pr-[24px]">
        <svg width="13" height="8" viewBox="0 0 13 8" fill="none" stroke="currentColor" strokeWidth="1.7"><path d="M.8 7.200L6.500 1.200l5.700 6" /></svg>
        <svg width="20" height="15" viewBox="0 0 20 15" className="ml-6" stroke="#1b1b1b" strokeWidth="1.3"><path d="M4.700 14a4 4 0 0 1-.6-8A5.800 5.800 0 0 1 15 5.500a4.300 4.300 0 0 1 .3 8.500z" fill="#e2e2e2" /><path d="M3 10.500L15.500 6A5.600 5.600 0 0 0 4.500 6.500 4 4 0 0 0 2 10.800z" fill="#8f8f8f" stroke="none" /></svg>
        <svg width="22" height="22" viewBox="0 0 22 22" className="ml-[19px]" fill="none" stroke="#222" strokeWidth="1.3"><path d="M1.500 10.500A9 9 0 0 1 19 8M19 2.500V8h-5.500M7 20A9 9 0 0 1 2 14.500M2 20v-5.500h5.500" /><circle cx="15.500" cy="16.500" r="5.200" fill="#f70000" stroke="none" /></svg>
        <div className="ml-[22px] w-[30px] text-center text-[14.2px] leading-5">ENG<br />IN</div>
        <svg width="20" height="16" viewBox="0 0 20 16" className="ml-[22px]" fill="none" stroke="#1b1b1b" strokeWidth="1.5"><path d="M1 5.500C6 .3 14 .3 19 5.500" stroke="#a7b7bd" /><path d="M3.500 8.200c3.700-3.800 9.300-3.800 13 0M6 10.800c2.400-2.300 5.600-2.300 8 0" /><circle cx="10" cy="13.500" r="1.7" fill="#1b1b1b" stroke="none" /></svg>
        <svg width="21" height="18" viewBox="0 0 21 18" className="ml-[9px]" fill="none" stroke="#1b1b1b" strokeWidth="1.3"><path d="M1 6.500v5h3l5 4.500V2L4 6.500zM12 6.300c1.300 1.500 1.300 3.900 0 5.400M14.700 4c2.600 2.800 2.600 7.200 0 10M17.300 2c3.500 3.800 3.500 10.200 0 14" /></svg>
        <svg width="20" height="13" viewBox="0 0 20 13" className="ml-[9px]"><rect x=".7" y=".7" width="16" height="11.6" rx="2.5" fill="none" stroke="#1b1b1b" strokeWidth="1.4" /><rect x="3" y="3" width="8" height="7" rx="1" fill="#1b1b1b" /><path d="M17.500 4.500c2 0 2 4 0 4z" fill="#1b1b1b" /></svg>
        <div className="ml-[14px] w-[84px] pb-[3px] text-right text-[14.7px] leading-5">13:15<br />07-07-2025</div>
        <svg width="17" height="20" viewBox="0 0 17 20" className="ml-[11px]" fill="#003e92"><path d="M8.500 0c4 0 6.300 3 6.300 6.500v4.500l2 4.500H.2l2-4.500V6.500C2.200 3 4.500 0 8.500 0zM5.500 17h6c0 3-6 3-6 0z" /></svg>
        <div className="relative ml-[23px] h-7 w-[30px]">
          <svg width="29" height="28" viewBox="0 0 29 28">
            <defs>
              <linearGradient id="copA" x1="0" y1="0" x2=".2" y2="1"><stop offset="0" stopColor="#1580e6" /><stop offset=".45" stopColor="#22b4c8" /><stop offset="1" stopColor="#f0c419" /></linearGradient>
              <linearGradient id="copB" x1="1" y1="0" x2="0" y2="1"><stop offset="0" stopColor="#8f6bf5" /><stop offset=".5" stopColor="#d85bc4" /><stop offset="1" stopColor="#ff8a4a" /></linearGradient>
            </defs>
            <path d="M8 0h10c3 0 3 4 4 8h-6L12 21H5c-4 0-6-2-5-6L3 4c1-3 2-4 5-4z" fill="url(#copA)" />
            <path d="M13 0h5c3 0 3 4 4 8h-6z" fill="#1747b8" />
            <path d="M16 8h9c3 0 4 2 3 5l-2 8c-1 3-2 6-5 6h-9z" fill="url(#copB)" />
          </svg>
          <span className="absolute right-0 -bottom-px flex h-[9px] w-[23px] items-center justify-center rounded-[2px] bg-[#ffc50f] text-[8px] leading-none font-extrabold tracking-[0.5px] text-[#222]">PRE</span>
        </div>
      </div>
    </footer>
  );
}

export default function App() {
  return (
    <div className="flex h-[1080px] w-[1920px] flex-col overflow-hidden bg-[#f9fafe] font-['Roboto',sans-serif] text-[#1f1f1f]">
      <TabStrip />
      <Toolbar />
      <Header />
      <div className="flex h-[832px]">
        <Sidebar />
        <MainPanel />
        <SideRail />
      </div>
      <Taskbar />
    </div>
  );
}
